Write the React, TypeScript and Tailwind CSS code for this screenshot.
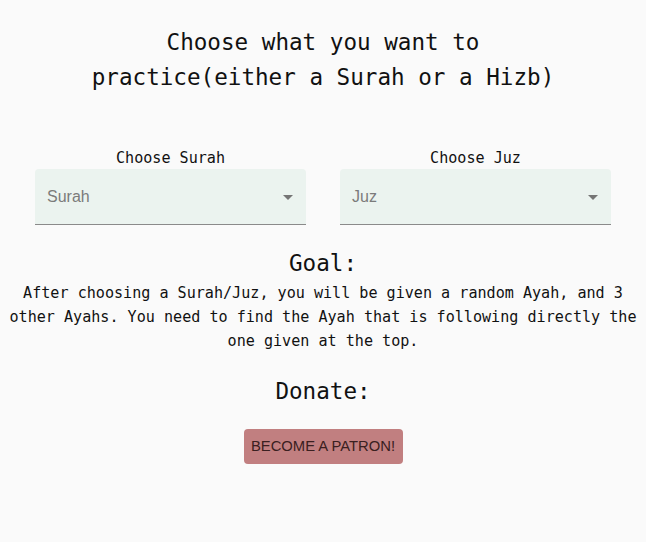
import React from "react";

const mono = { fontFamily: '"DejaVu Sans Mono", "Liberation Mono", monospace' };

function SelectBox({ label, placeholder }: { label: string; placeholder: string }) {
  return (
    <div className="flex w-[271px] flex-col items-center">
      <div className="h-[24px] pt-[1px] text-[15.1px] leading-[24px] text-[#111]" style={mono}>
        {label}
      </div>
      <div className="flex h-[56px] w-full items-center justify-between rounded-t-[4px] border-b border-[#8a8a8a] bg-[#ebf3ef] pl-[12px] pr-[13px]">
        <span
          className="text-[16px] text-[#7b7b7b]"
          style={{ fontFamily: '"Liberation Sans", Arial, sans-serif' }}
        >
          {placeholder}
        </span>
        <svg width="10" height="5" viewBox="0 0 10 5" className="mt-[1px]">
          <path d="M0 0 L10 0 L5 5 Z" fill="#757575" />
        </svg>
      </div>
    </div>
  );
}

export default function App() {
  return (
    <div className="min-h-[542px] w-full bg-[#fafafa] text-[#111]" style={mono}>
      <h1 className="mx-auto w-[480px] pt-[25px] text-center text-[22.6px] font-normal leading-[35px]">
        Choose what you want to practice(either a Surah or a Hizb)
      </h1>
      <div className="mt-[50px] flex justify-center gap-[34px]">
        <SelectBox label="Choose Surah" placeholder="Surah" />
        <SelectBox label="Choose Juz" placeholder="Juz" />
      </div>
      <h2 className="mt-[23px] text-center text-[22.6px] font-normal leading-[30px]">Goal:</h2>
      <p className="mt-[3px] text-center text-[15.1px] leading-[24px]">
        After choosing a Surah/Juz, you will be given a random Ayah, and 3 other Ayahs. You need to
        find the Ayah that is following directly the one given at the top.
      </p>
      <h2 className="mt-[23px] text-center text-[22.6px] font-normal leading-[30px]">Donate:</h2>
      <div className="mt-[23px] flex justify-center">
        <button
          className="h-[35px] w-[159px] rounded-[4px] bg-[#c17f80] text-[14.8px] uppercase text-[#3a2020]"
          style={{ fontFamily: '"Liberation Sans", Arial, sans-serif' }}
        >
          Become a Patron!
        </button>
      </div>
    </div>
  );
}
